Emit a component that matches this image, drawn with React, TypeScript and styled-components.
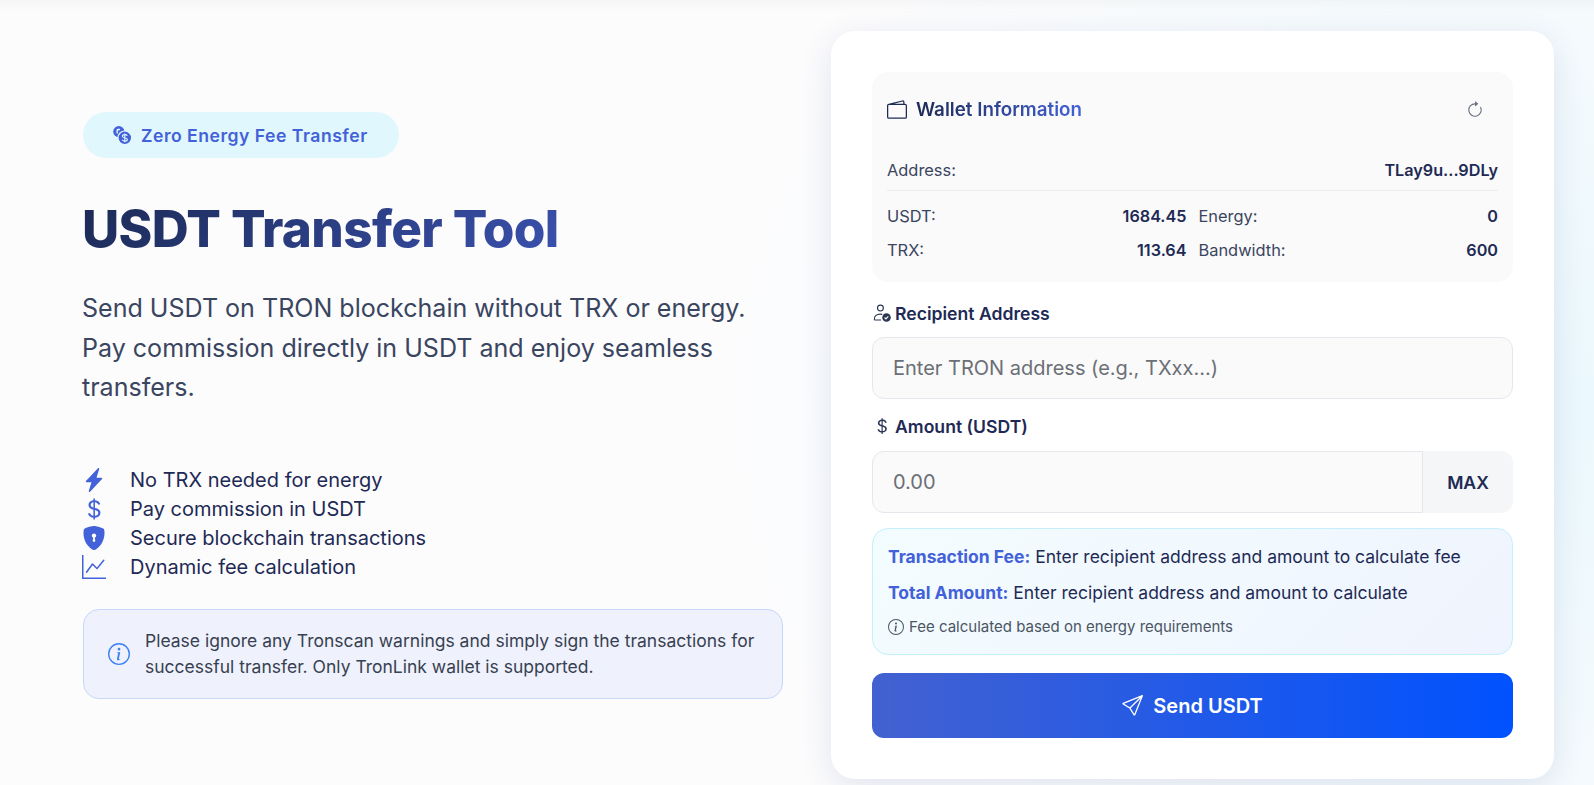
import React from 'react';
import styled, {createGlobalStyle} from 'styled-components';
import {
  BsArrowClockwise,
  BsCurrencyDollar,
  BsGraphUp,
  BsInfoCircle,
  BsLightningChargeFill,
  BsSend,
  BsShieldLockFill,
  BsWallet2,
} from 'react-icons/bs';

const GlobalStyle = createGlobalStyle`
  * { box-sizing: border-box; }
  html, body { margin: 0; height: 100%; overflow: hidden; }
  body {
    font-family: Inter, "Noto Sans", sans-serif;
    color: #1e2a55;
  }
`;

const Page = styled.div`
  height: 785px;
  display: flex;
  gap: 48px;
  padding: 31px 40px 0 83px;
  background: radial-gradient(ellipse 55% 85% at 100% 52%, #ebf8fd 0%, rgba(235, 248, 253, 0) 100%), #fcfcfd;
  box-shadow: inset 0 14px 16px -14px rgba(0, 0, 0, 0.06);
`;
const Intro = styled.div`
  width: 700px;
  padding-top: 81px;
`;
const Pill = styled.div`
  display: inline-flex;
  align-items: center;
  gap: 9px;
  height: 46px;
  padding: 0 31px 0 29px;
  border-radius: 23px;
  background: #e0f7fd;
  color: #4361d8;
  font-size: 17.6px;
  font-weight: 600;
  letter-spacing: 0.5px;
`;
const Title = styled.h1`
  margin: 39px 0 0 -1px;
  width: fit-content;
  font-size: 51.2px;
  line-height: 62px;
  font-weight: 800;
  letter-spacing: -0.65px;
  background: linear-gradient(135deg, #1b2a54 0%, #3a51ae 100%);
  -webkit-background-clip: text;
  background-clip: text;
  color: transparent;
`;
const Lead = styled.p`
  margin: 30px 0 0 -1px;
  font-size: 25.05px;
  line-height: 39.7px;
  font-weight: 400;
  color: #3a4560;
`;
const Features = styled.ul`
  list-style: none;
  margin: 57px 0 0;
  padding: 0;
`;
const Feature = styled.li`
  display: flex;
  align-items: center;
  height: 29px;
  font-size: 20px;
  color: #1e2a55;
  svg { width: 24px; height: 24px; color: #4361d8; }
`;
const FeatureIcon = styled.span`
  display: flex;
  justify-content: center;
  width: 24px;
  margin: 0 24px 0 -1px;
`;
const Notice = styled.div`
  display: flex;
  align-items: center;
  gap: 15px;
  height: 90px;
  margin-top: 28px;
  padding: 0 24px;
  border: 1px solid #c6d8f8;
  border-radius: 16px;
  background: #eff1fc;
  color: #374151;
  font-size: 17.5px;
  line-height: 26.4px;
  svg { flex: none; width: 22px; height: 22px; color: #3b82f6; }
`;

const Card = styled.section`
  width: 723px;
  height: 748px;
  padding: 41px 41px 0;
  background: #fff;
  border-radius: 24px;
  box-shadow: 0 8px 32px rgba(40, 60, 135, 0.12);
`;
const WalletPanel = styled.div`
  height: 210px;
  padding: 0 15px;
  background: #fafafa;
  border-radius: 16px;
`;
const WalletHead = styled.div`
  display: flex;
  align-items: center;
  height: 75px;
  gap: 9px;
  svg { width: 20px; height: 20px; color: #1e2a55; }
`;
const WalletTitle = styled.h2`
  margin: 0;
  font-size: 18.8px;
  font-weight: 600;
  background: linear-gradient(90deg, #1e2a55 0%, #4361d8 100%);
  -webkit-background-clip: text;
  background-clip: text;
  color: transparent;
`;
const Refresh = styled.span`
  display: flex;
  margin: 0 14px 0 auto;
  svg { width: 18px; height: 18px; color: #6b7280; }
`;
const AddressRow = styled.div`
  display: flex;
  justify-content: space-between;
  align-items: center;
  height: 40px;
  margin-top: 4px;
  padding-bottom: 1px;
  border-bottom: 1px solid #ebecef;
`;
const Stats = styled.div`
  display: grid;
  grid-template-columns: 1fr 1fr;
  column-gap: 12px;
  margin-top: 8px;
`;
const Stat = styled.div`
  display: flex;
  justify-content: space-between;
  align-items: center;
  height: 34px;
`;
const Key = styled.span`
  font-size: 16.4px;
  color: #3a4560;
`;
const Value = styled.span`
  font-size: 16.2px;
  font-weight: 600;
  color: #1e2a55;
`;
const Label = styled.label<{$top: number; $bottom: number}>`
  display: flex;
  align-items: center;
  gap: 3px;
  height: 24px;
  font-size: 17.6px;
  font-weight: 600;
  color: #1e2a55;
  margin: ${p => p.$top}px 0 ${p => p.$bottom}px;
`;
const LabelIcon = styled.span`
  display: flex;
  justify-content: center;
  width: 19px;
  margin-right: 1px;
  color: #2b3654;
  svg { width: 18px; height: 18px; }
`;
const TextInput = styled.input`
  display: block;
  width: 100%;
  height: 62px;
  padding: 0 20px;
  border: 1px solid #e4e7ec;
  border-radius: 12px;
  background: #fafafa;
  font: 400 20px Inter, sans-serif;
  color: #1e2a55;
  outline: none;
  &::placeholder { color: #6b6f76; opacity: 1; }
`;
const InputGroup = styled.div`
  display: flex;
  height: 62px;
`;
const AmountInput = styled(TextInput)`
  flex: 1;
  border-radius: 12px 0 0 12px;
`;
const MaxButton = styled.button`
  width: 90px;
  border: 0;
  border-radius: 0 12px 12px 0;
  background: #f4f6f7;
  color: #1e2a55;
  font: 600 17.6px Inter, sans-serif;
`;
const FeeBox = styled.div`
  height: 127px;
  margin-top: 15px;
  padding: 16px 15px 0;
  border: 1px solid #c4effc;
  border-radius: 16px;
  background: linear-gradient(135deg, #f3fcfe 0%, #eff4fe 100%);
  font-size: 17.5px;
`;
const FeeLine = styled.div`
  height: 24px;
  line-height: 24px;
  margin-bottom: 12px;
  color: #1e2a55;
  b { font-weight: 700; color: #4361d8; }
`;
const FeeHint = styled.div`
  display: flex;
  align-items: center;
  gap: 5px;
  font-size: 15px;
  color: #4b5563;
  svg { width: 16px; height: 16px; }
`;
const SendButton = styled.button`
  display: flex;
  align-items: center;
  justify-content: center;
  gap: 10px;
  width: 100%;
  height: 65px;
  margin-top: 18px;
  border: 0;
  border-radius: 12px;
  background: linear-gradient(90deg, #4361d0 0%, #0052ff 100%);
  color: #fff;
  font: 600 20px Inter, sans-serif;
  svg { width: 21px; height: 21px; }
`;

const CoinsIcon = () => (
  <svg width="20" height="20" viewBox="0 0 20 20" fill="currentColor">
    <circle cx="6.8" cy="6.6" r="5.6" />
    <circle cx="12.8" cy="12.8" r="6.8" stroke="#e0f7fd" strokeWidth="1.2" />
    <path d="M4.5 8.6V5.2q0-1.4 1.6-1.4h2v1.4h-1.5q-.7 0-.7.6v2.8z" fill="#e0f7fd" />
    <path d="M15.4 10.8c-.5-.8-1.4-1.2-2.6-1.2-1.4 0-2.4.7-2.4 1.7 0 2.3 5 1 5 3.1 0 1-1 1.7-2.5 1.7-1.2 0-2.2-.5-2.7-1.3" fill="none" stroke="#e0f7fd" strokeWidth="1.1" />
    <path d="M12.8 8.4v8.8" stroke="#e0f7fd" strokeWidth="1.1" />
  </svg>
);
const RecipientIcon = () => (
  <svg viewBox="0 0 16 16" fill="none" stroke="currentColor" strokeWidth="1">
    <circle cx="6.6" cy="3.6" r="2.6" />
    <path d="M1.2 14.2c-.6-3.2 2-5.2 5.2-5.2 .7 0 1.3.1 1.8.2M1.2 14.2h6" />
    <circle cx="12" cy="12" r="3.8" fill="currentColor" stroke="none" />
    <path d="M10.3 12l1.2 1.2 2.1-2.3" stroke="#fff" strokeWidth="1" />
  </svg>
);

const featureList = [
  {icon: <BsLightningChargeFill />, text: 'No TRX needed for energy'},
  {icon: <BsCurrencyDollar />, text: 'Pay commission in USDT'},
  {icon: <BsShieldLockFill />, text: 'Secure blockchain transactions'},
  {icon: <BsGraphUp />, text: 'Dynamic fee calculation'},
];

function App() {
  return (
    <Page>
      <GlobalStyle />
      <Intro>
        <Pill><CoinsIcon />Zero Energy Fee Transfer</Pill>
        <Title>USDT Transfer Tool</Title>
        <Lead>
          Send USDT on TRON blockchain without TRX or energy. Pay commission directly in USDT and enjoy seamless transfers.
        </Lead>
        <Features>
          {featureList.map(f => (
            <Feature key={f.text}>
              <FeatureIcon>{f.icon}</FeatureIcon>
              {f.text}
            </Feature>
          ))}
        </Features>
        <Notice>
          <BsInfoCircle />
          <span>Please ignore any Tronscan warnings and simply sign the transactions for successful transfer. Only TronLink wallet is supported.</span>
        </Notice>
      </Intro>
      <Card>
        <WalletPanel>
          <WalletHead>
            <BsWallet2 />
            <WalletTitle>Wallet Information</WalletTitle>
            <Refresh><BsArrowClockwise /></Refresh>
          </WalletHead>
          <AddressRow>
            <Key>Address:</Key>
            <Value>TLay9u...9DLy</Value>
          </AddressRow>
          <Stats>
            <Stat><Key>USDT:</Key><Value>1684.45</Value></Stat>
            <Stat><Key>Energy:</Key><Value>0</Value></Stat>
            <Stat><Key>TRX:</Key><Value>113.64</Value></Stat>
            <Stat><Key>Bandwidth:</Key><Value>600</Value></Stat>
          </Stats>
        </WalletPanel>
        <Label $top={19} $bottom={12}><LabelIcon><RecipientIcon /></LabelIcon>Recipient Address</Label>
        <TextInput placeholder="Enter TRON address (e.g., TXxx...)" />
        <Label $top={15} $bottom={13}><LabelIcon><BsCurrencyDollar /></LabelIcon>Amount (USDT)</Label>
        <InputGroup>
          <AmountInput placeholder="0.00" />
          <MaxButton>MAX</MaxButton>
        </InputGroup>
        <FeeBox>
          <FeeLine><b>Transaction Fee:</b> Enter recipient address and amount to calculate fee</FeeLine>
          <FeeLine><b>Total Amount:</b> Enter recipient address and amount to calculate</FeeLine>
          <FeeHint><BsInfoCircle />Fee calculated based on energy requirements</FeeHint>
        </FeeBox>
        <SendButton><BsSend />Send USDT</SendButton>
      </Card>
    </Page>
  );
}

export default App;
